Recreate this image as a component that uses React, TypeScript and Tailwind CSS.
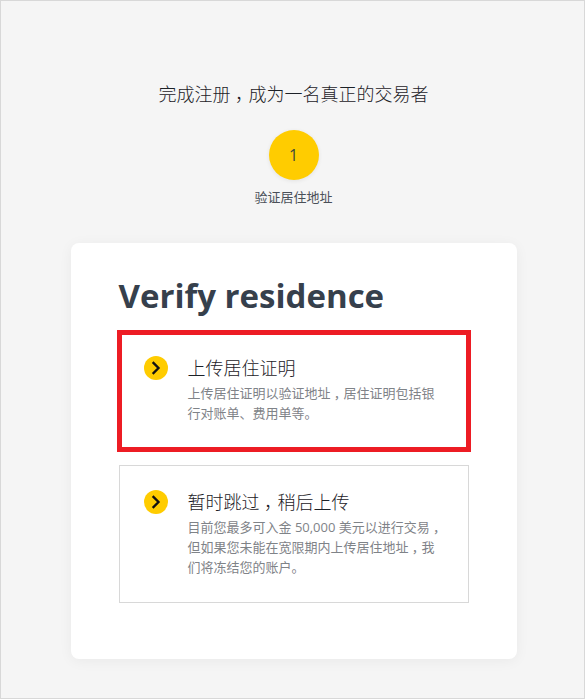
import { ReactNode } from "react";
import { ChevronRight } from "lucide-react";

const cjk = "font-['Open_Sans','Noto_Sans_CJK_SC',sans-serif]";

// the reference font centres the full-width comma in its cell
function Comma() {
  return <span className="inline-block px-[0.25em] [font-feature-settings:'halt']">，</span>;
}

function Arrow() {
  return (
    <div className="w-6 h-6 shrink-0 rounded-full bg-[#ffcc00] flex items-center justify-center">
      <ChevronRight className="w-5 h-5 text-[#111]" strokeWidth={2.8} strokeLinecap="square" strokeLinejoin="miter" />
    </div>
  );
}

function Option({ title, desc, className }: { title: ReactNode; desc: ReactNode; className: string }) {
  return (
    <div className={`flex gap-5 ${className}`}>
      <Arrow />
      <div className="w-[256px]">
        <h3 className="text-[18px] leading-6 font-light text-[#1c2127]">{title}</h3>
        <p className="mt-[3px] text-[13px] leading-[20px] text-[#7f8388]">{desc}</p>
      </div>
    </div>
  );
}

export default function App() {
  return (
    <div className={`h-[699px] w-[585px] bg-[#f5f5f5] border border-[#d8d8d8] flex flex-col items-center pt-[80px] pl-[2px] ${cjk}`}>
      <h2 className="text-[18px] leading-[26px] font-light text-[#1c2127]">
        完成注册<Comma />成为一名真正的交易者
      </h2>
      <div className="mt-[23px] w-[50px] h-[50px] rounded-full bg-[#ffcc00] shadow-[0_1px_4px_rgba(0,0,0,0.08)] flex items-center justify-center text-[16px] text-[#3d4a3c]">
        1
      </div>
      <div className="mt-[7px] text-[13px] leading-[20px] text-[#4a5058]">验证居住地址</div>

      <div className="mt-[36px] w-[446px] h-[416px] rounded-lg bg-white shadow-[0_2px_14px_rgba(0,0,0,0.05)] px-[48px] pt-[29px]">
        <h1 className="text-[33px] leading-[48px] font-bold text-[#36404c] whitespace-nowrap">Verify residence</h1>
        <div className="mt-[10px] flex flex-col gap-[13px]">
          <Option
            className="-mx-[2px] h-[122px] border-[5px] border-[#ed1c24] pt-[21px] pl-[22px]"
            title="上传居住证明"
            desc={<>上传居住证明以验证地址<Comma />居住证明包括银<br />行对账单、费用单等。</>}
          />
          <Option
            className="h-[138px] border border-[#d8d8d8] pt-6 pl-6"
            title={<>暂时跳过<Comma />稍后上传</>}
            desc={<>目前您最多可入金 50,000 美元以进行交易<Comma /><br />但如果您未能在宽限期内上传居住地址<Comma />我<br />们将冻结您的账户。</>}
          />
        </div>
      </div>
    </div>
  );
}
